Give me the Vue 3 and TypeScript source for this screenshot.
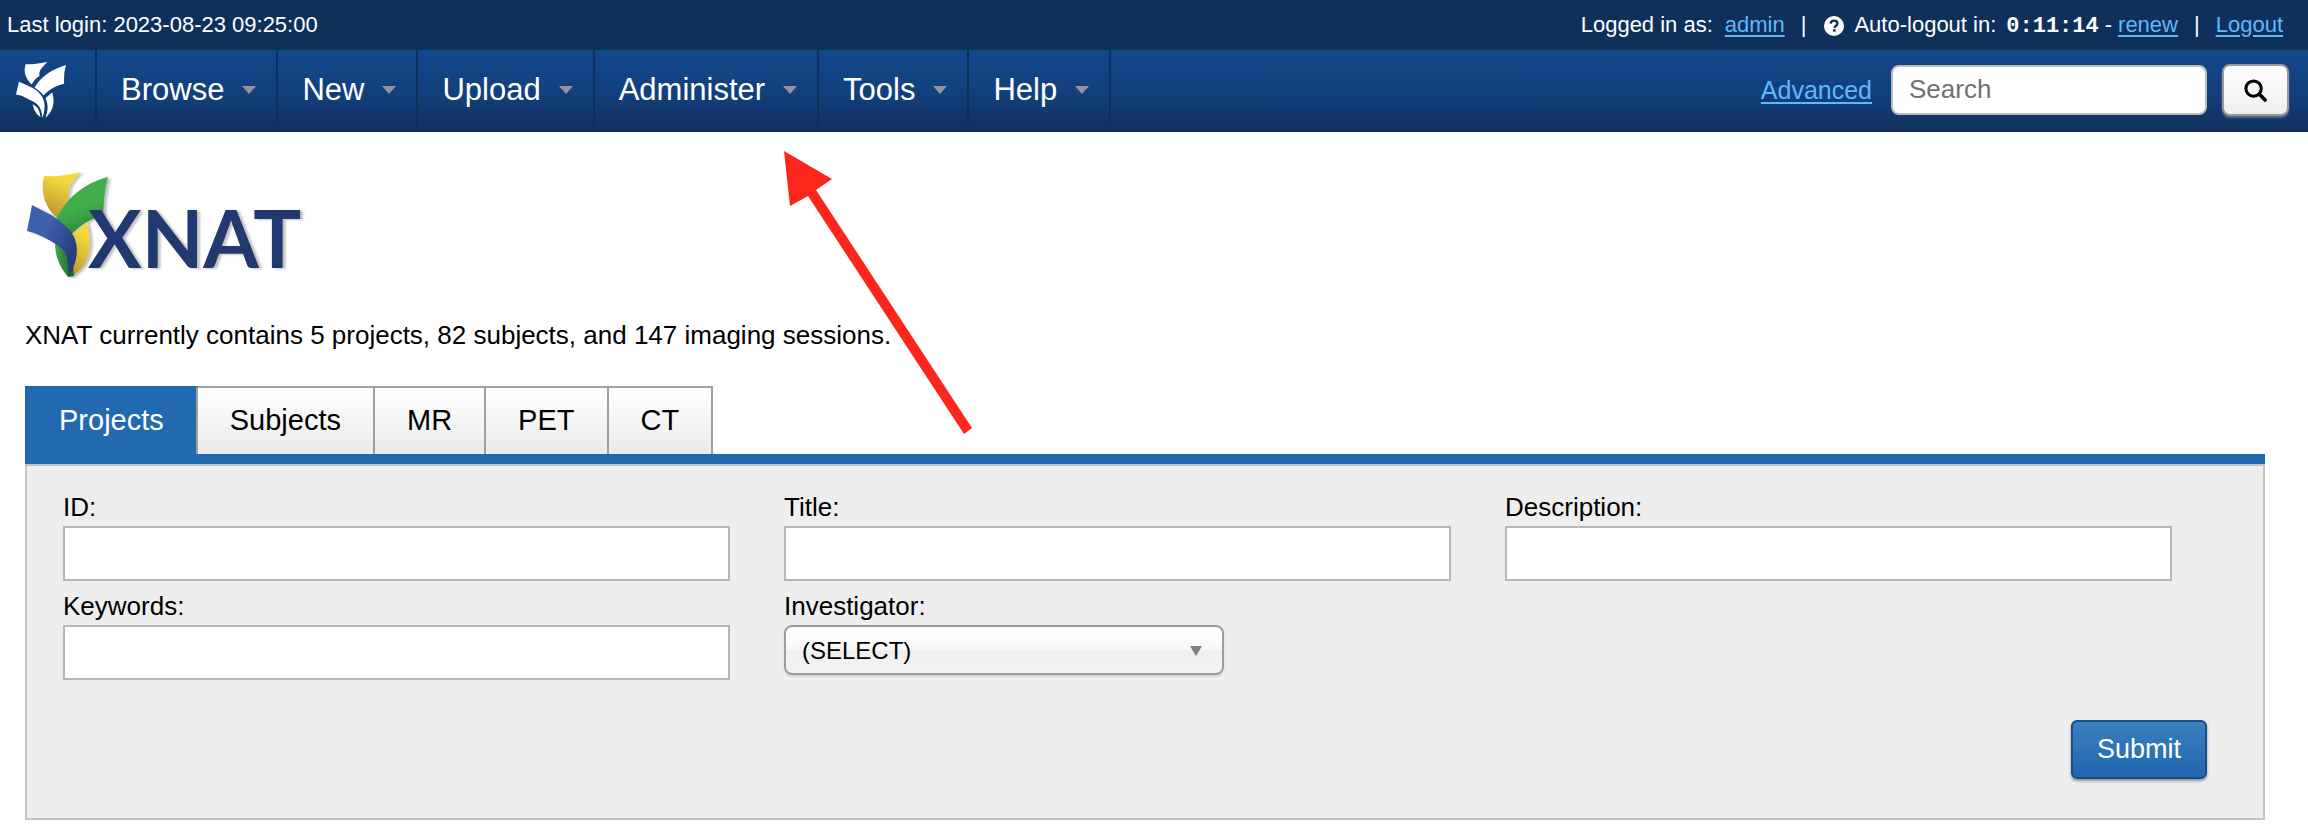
<script setup lang="ts">
import { ref } from 'vue'

interface Field {
  id: string
  label: string
  kind: 'text' | 'select'
}

const menus: string[] = ['Browse', 'New', 'Upload', 'Administer', 'Tools', 'Help']
const tabs: string[] = ['Projects', 'Subjects', 'MR', 'PET', 'CT']
const fields: Field[] = [
  { id: 'project-id', label: 'ID:', kind: 'text' },
  { id: 'title', label: 'Title:', kind: 'text' },
  { id: 'description', label: 'Description:', kind: 'text' },
  { id: 'keywords', label: 'Keywords:', kind: 'text' },
  { id: 'investigator', label: 'Investigator:', kind: 'select' },
]
const activeTab = ref('Projects')
</script>

<template>
  <div class="page">
    <header>
      <div class="user-bar">
        <span>Last login: 2023-08-23 09:25:00</span>
        <div class="user-info">
          <span>Logged in as:</span>
          <a href="#" class="admin">admin</a>
          <span class="bar">|</span>
          <svg class="help" viewBox="0 0 20 20" aria-hidden="true">
            <circle cx="10" cy="10" r="10" fill="#fff" />
            <path d="M6.7 7.6C6.9 5.4 8.3 4.6 10 4.6c2 0 3.4 1.1 3.4 2.8 0 2.3-2.7 2.3-2.9 4.4" fill="none" stroke="#10305c" stroke-width="2.4" />
            <rect x="9" y="13.2" width="2.6" height="2.5" fill="#10305c" />
          </svg>
          <span class="auto">Auto-logout in:</span>
          <b class="timer">0:11:14</b>
          <span class="dash">-</span>
          <a href="#">renew</a>
          <span class="bar">|</span>
          <a href="#">Logout</a>
        </div>
      </div>
      <div class="nav-bar">
        <nav>
          <a href="#" class="home" aria-label="Home">
            <svg viewBox="0 0 52 60" fill="#fff" aria-hidden="true">
              <path d="M10 3C17 4 24 2 32 1C26 7 23 10 24 15C20 18 18 20 16 24C10 18 7 11 10 3Z" />
              <path d="M51 4C49 10 49 16 49 23C41 25 35 28 28 35C26 32 22 29 19 27C25 16 37 8 51 4Z" />
              <path d="M3 21C9 24 16 26 21 30C30 37 31 47 27 58C26 48 23 44 17 41C11 38 7 35 0 34Z" />
              <path d="M37 32C40 42 38 51 30 58C33 50 33 44 30 38C32 36 34 34 37 32Z" />
              <path d="M17 44C23 47 24 51 25 57C20 54 18 49 17 44Z" />
            </svg>
          </a>
          <button v-for="menu in menus" :key="menu" type="button" class="menu">
            {{ menu }}<span class="caret"></span>
          </button>
        </nav>
        <form class="search" @submit.prevent>
          <a href="#">Advanced</a>
          <input type="search" placeholder="Search" aria-label="Search" />
          <button type="submit" aria-label="Run search">
            <svg viewBox="0 0 24 24" fill="none" stroke="#000" aria-hidden="true">
              <circle cx="10" cy="10" r="8" stroke-width="3.2" />
              <path d="M16 16L22 22" stroke-width="3.8" stroke-linecap="round" />
            </svg>
          </button>
        </form>
      </div>
    </header>

    <main>
      <svg class="logo" viewBox="0 0 290 108" role="img" aria-label="XNAT">
        <defs>
          <linearGradient id="gold" x1="0.7" y1="0" x2="0.4" y2="1">
            <stop offset="0.2" stop-color="#f4d93a" />
            <stop offset="1" stop-color="#bd962d" />
          </linearGradient>
          <linearGradient id="leaf" x1="0.5" y1="0.3" x2="0.7" y2="0.9">
            <stop offset="0.3" stop-color="#43ae4b" />
            <stop offset="1" stop-color="#2f843b" />
          </linearGradient>
          <linearGradient id="ocean" x1="0.1" y1="0.2" x2="0.9" y2="0.8">
            <stop offset="0.3" stop-color="#3c60aa" />
            <stop offset="1" stop-color="#243b7c" />
          </linearGradient>
          <linearGradient id="stem" x1="0" y1="0" x2="1" y2="0">
            <stop offset="0" stop-color="#48a64b" />
            <stop offset="1" stop-color="#17602c" />
          </linearGradient>
          <filter id="shade" x="-10%" y="-10%" width="125%" height="125%">
            <feDropShadow dx="3" dy="1" stdDeviation="1" flood-color="#777" flood-opacity="0.45" />
          </filter>
        </defs>
        <g filter="url(#shade)">
          <path d="M17 4C29 5 42 3 54 0C45 9 40 15 41 28L30 46C18 36 13 20 17 4Z" fill="url(#gold)" />
          <path d="M60 50C66 75 63 93 44 105L40 68Z" fill="url(#gold)" />
          <path d="M28 70L44 74L47 104L41 105C32 94 28 84 28 70Z" fill="url(#stem)" />
          <path d="M81 5C77 20 77 31 76 44C62 47 53 53 43 64L29 48C38 27 57 11 81 5Z" fill="url(#leaf)" />
          <path d="M5 33C15 39 27 43 35 51C54 65 53 84 42 105C40 86 42 81 30 73C21 67 12 62 0 59Z" fill="url(#ocean)" />
        </g>
        <text class="wordmark" x="61" y="96" filter="url(#shade)">XNAT</text>
      </svg>

      <p class="summary">XNAT currently contains 5 projects, 82 subjects, and 147 imaging sessions.</p>

      <div class="tabs" role="tablist">
        <button
          v-for="tab in tabs"
          :key="tab"
          type="button"
          role="tab"
          :aria-selected="tab === activeTab"
          :class="{ active: tab === activeTab }"
          @click="activeTab = tab"
        >{{ tab }}</button>
      </div>
      <form class="panel" @submit.prevent>
        <div class="fields">
          <div v-for="field in fields" :key="field.id" class="field">
            <label :for="field.id">{{ field.label }}</label>
            <input v-if="field.kind === 'text'" :id="field.id" type="text" />
            <div v-else class="select-box">
              <select :id="field.id">
                <option>(SELECT)</option>
              </select>
              <span class="select-arrow"></span>
            </div>
          </div>
        </div>
        <div class="actions">
          <button type="submit">Submit</button>
        </div>
      </form>
      <svg class="pointer" viewBox="0 0 188 283" aria-hidden="true">
        <polygon points="0,0 48,28 32,39 188,277 180,283 24,45 6,55" fill="#fc261d" />
      </svg>
    </main>
  </div>
</template>

<style>
body {
  margin: 0;
  background: #fff;
}
</style>

<style scoped>
.page {
  font-family: "Liberation Sans", Arial, Helvetica, sans-serif;
  font-size: 26px;
  line-height: 30px;
  color: #000;
}
* {
  box-sizing: border-box;
}
button,
input,
select {
  font-family: inherit;
  margin: 0;
}
.user-bar {
  display: flex;
  justify-content: space-between;
  align-items: center;
  height: 50px;
  padding: 0 25px 0 7px;
  background: #10305c;
  color: #fff;
  font-size: 22px;
  line-height: 26px;
}
.user-info {
  display: flex;
  align-items: baseline;
  padding-top: 2px;
}
a {
  color: #5fb8fb;
  text-underline-offset: 3px;
}
.admin {
  margin-left: 12px;
}
.bar {
  margin: 0 16px;
}
.help {
  align-self: center;
  width: 20px;
  height: 20px;
  margin-left: 2px;
}
.auto {
  margin: 0 10px;
}
.timer {
  font-family: "Liberation Mono", "Courier New", monospace;
  font-size: 22px;
}
.dash {
  margin: 0 6px;
}
.nav-bar {
  display: flex;
  justify-content: space-between;
  height: 82px;
  background: linear-gradient(#14478c, #123f7c 55%, #10305c);
}
nav {
  display: flex;
}
.home {
  display: flex;
  align-items: center;
  padding: 0 28px 2px 16px;
  border-right: 2px solid #10305c;
}
.home svg {
  width: 51px;
  height: 59px;
}
.menu {
  display: flex;
  align-items: center;
  gap: 18px;
  padding: 0 20px 2px 24px;
  border: 0;
  border-right: 2px solid #10305c;
  background: none;
  color: #fff;
  font-size: 31px;
}
.caret {
  border: 7px solid transparent;
  border-top: 8px solid #939598;
  border-bottom: 0;
}
.search {
  display: flex;
  align-items: center;
  padding-right: 19px;
  padding-bottom: 2px;
}
.search a {
  margin-right: 19px;
  font-size: 25px;
}
.search input {
  width: 316px;
  height: 50px;
  padding: 0 16px 2px;
  border: 2px solid #bbb;
  border-radius: 8px;
  background: #fff;
  font-size: 26px;
  appearance: none;
}
.search input::placeholder {
  color: #717171;
}
.search button {
  display: flex;
  align-items: center;
  justify-content: center;
  width: 67px;
  height: 52px;
  margin-left: 15px;
  padding: 0;
  border: 2px solid #999;
  border-radius: 8px;
  background: linear-gradient(#fff, #eee);
  box-shadow: 0 2px 2px rgba(190, 190, 190, 0.4);
}
.search button svg {
  width: 23px;
  height: 23px;
}
main {
  position: relative;
  padding: 40px 43px 12px 25px;
}
.logo {
  display: block;
  width: 290px;
  height: 108px;
  margin-left: 2px;
}
.wordmark {
  font-family: Lato, sans-serif;
  font-size: 80px;
  font-weight: 700;
  fill: #20376f;
}
.summary {
  margin: 40px 0 36px;
}
.tabs {
  display: flex;
  border-bottom: 10px solid #2369af;
}
.tabs button {
  height: 68px;
  padding: 0 32px 2px;
  border: 2px solid #a0a0a0;
  border-width: 2px 2px 0 0;
  background: linear-gradient(#fff, #ebebeb);
  color: #000;
  font-size: 29px;
}
.tabs button:first-child {
  border-left-width: 2px;
}
.tabs button.active {
  border-color: #2369af #a0a0a0 #2369af #2369af;
  background: #2369af;
  color: #fff;
}
.panel {
  border: 2px solid #c3c3c3;
  background: #eee;
}
.fields {
  display: grid;
  grid-template-columns: repeat(3, 1fr);
  column-gap: 54px;
  row-gap: 10px;
  padding: 26px 91px 0 36px;
}
.field label {
  display: block;
  margin-bottom: 4px;
}
.field input {
  display: block;
  width: 100%;
  height: 55px;
  padding: 0 12px;
  border: 2px solid #b6b6b6;
  background: #fff;
  font-size: 26px;
}
.select-box {
  position: relative;
  width: 66%;
}
.select-box select {
  display: block;
  width: 100%;
  height: 50px;
  padding: 0 16px;
  border: 2px solid #9c9c9c;
  border-radius: 8px;
  background: linear-gradient(#fff 20%, #f6f6f6 50%, #eee 52%, #f4f4f4);
  box-shadow: 0 2px 2px rgba(0, 0, 0, 0.1);
  color: #000;
  font-size: 24px;
  appearance: none;
}
.select-arrow {
  position: absolute;
  top: 21px;
  right: 22px;
  border: 6px solid transparent;
  border-top: 10px solid #808080;
  border-bottom: 0;
  pointer-events: none;
}
.actions {
  display: flex;
  justify-content: flex-end;
  padding: 40px 56px 39px;
}
.actions button {
  height: 59px;
  padding: 0 24px;
  border: 2px solid #144e8c;
  border-radius: 6px;
  background: linear-gradient(#3a7fbd, #2067b0);
  box-shadow: 0 2px 3px rgba(0, 0, 0, 0.4);
  color: #fff;
  font-size: 27px;
}
.pointer {
  position: absolute;
  top: 19px;
  left: 784px;
  width: 188px;
  height: 283px;
  pointer-events: none;
}
</style>
